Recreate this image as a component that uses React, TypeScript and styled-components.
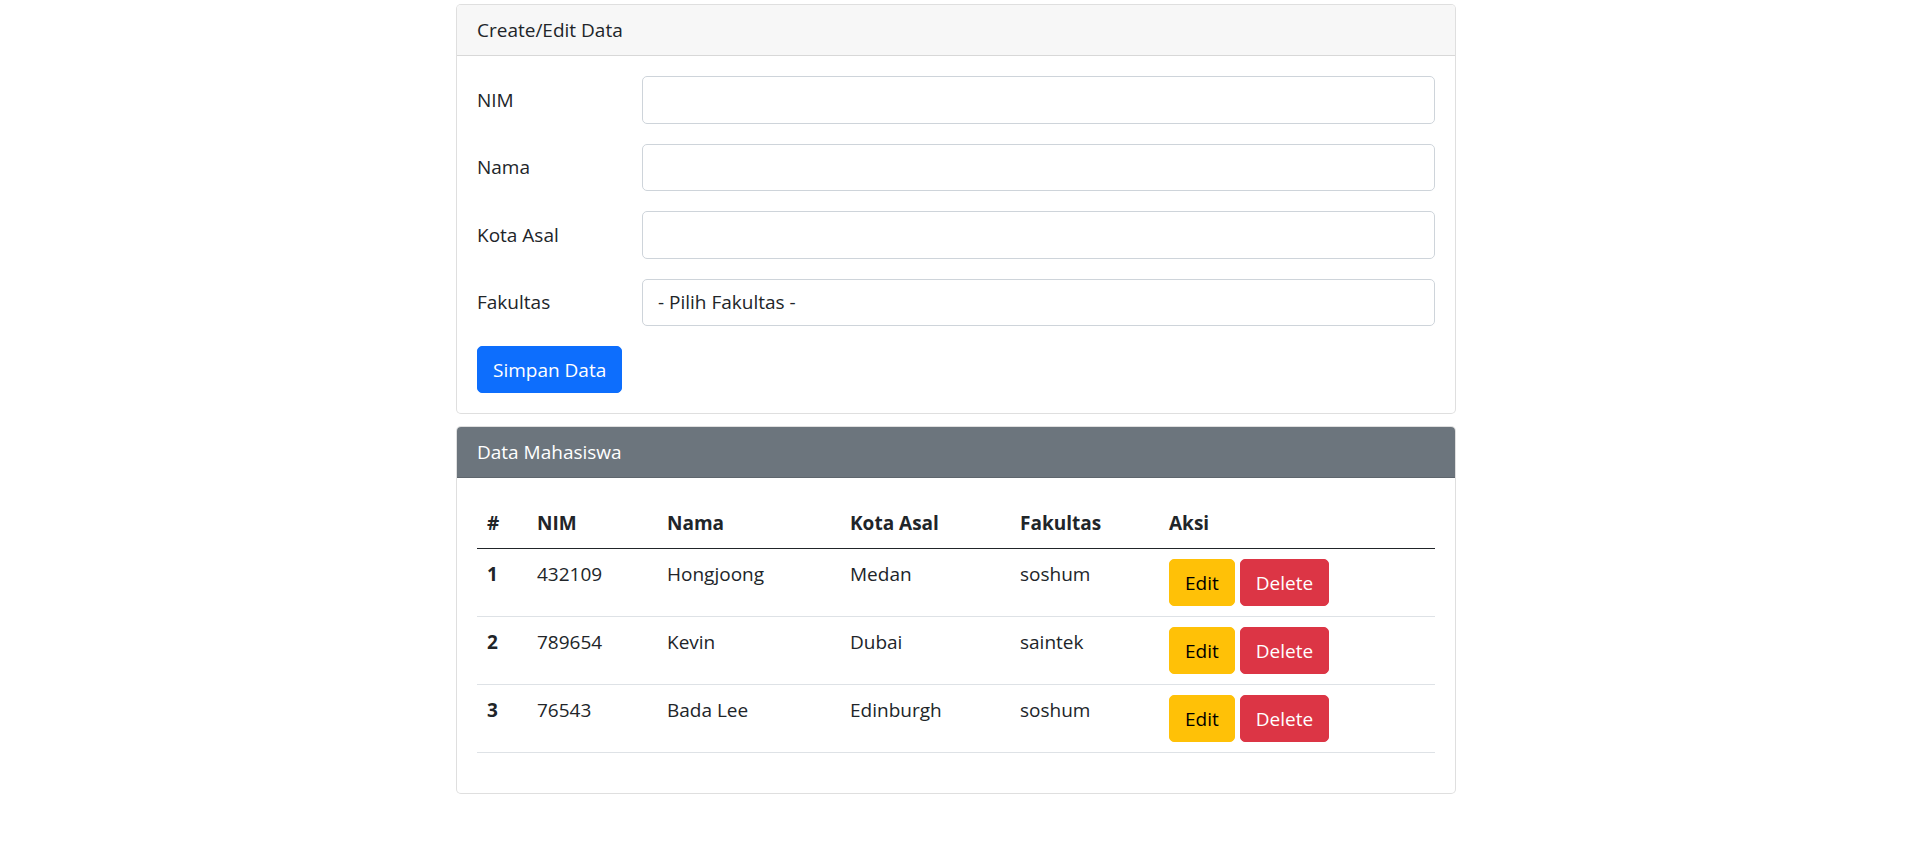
import React from "react";
import styled, { createGlobalStyle, css } from "styled-components";

const GlobalStyle = createGlobalStyle`
  * { box-sizing: border-box; }
  html, body { margin: 0; padding: 0; background: #fff; }
  body {
    font-family: "Open Sans", "Noto Sans", sans-serif;
    font-size: 19px;
    line-height: 30px;
    color: #212529;
  }
`;

const Page = styled.div`
  display: flex;
  justify-content: center;
  padding: 4px 0 40px 5px;
`;

const Column = styled.div`
  width: 1000px;
  display: flex;
  flex-direction: column;
  gap: 12px;
`;

const Card = styled.section`
  border: 1px solid rgba(0, 0, 0, 0.125);
  border-radius: 5px;
  background: #fff;
  overflow: hidden;
`;

const CardHeader = styled.div<{ $variant?: "light" | "secondary" }>`
  padding: 10px 20px;
  line-height: 30px;
  border-bottom: 1px solid rgba(0, 0, 0, 0.125);
  ${({ $variant }) =>
    $variant === "secondary"
      ? css`
          background: #6c757d;
          color: #fff;
        `
      : css`
          background: #f7f7f7;
          color: #212529;
        `}
`;

const CardBody = styled.div`
  padding: 20px;
`;

const FormRow = styled.div`
  display: grid;
  grid-template-columns: 165px 1fr;
  margin-bottom: 20px;
`;

const Label = styled.label`
  padding: 8.75px 0;
  line-height: 30px;
`;

const fieldStyles = css`
  display: block;
  width: 100%;
  height: 47.5px;
  padding: 7.75px 15px;
  font-family: inherit;
  font-size: 19px;
  line-height: 30px;
  color: #212529;
  background: #fff;
  border: 1px solid #ced4da;
  border-radius: 5px;
  outline: none;
`;

const Input = styled.input`
  ${fieldStyles}
`;

const Select = styled.select`
  ${fieldStyles}
  appearance: none;
  -webkit-appearance: none;
`;

const Button = styled.button<{ $tone: "primary" | "warning" | "danger" }>`
  display: inline-block;
  height: 47px;
  padding: 7.5px 15px;
  font-family: inherit;
  font-size: 19px;
  line-height: 30px;
  border-radius: 5px;
  border: 1px solid transparent;
  cursor: pointer;
  ${({ $tone }) =>
    $tone === "primary"
      ? css`
          background: #0d6efd;
          border-color: #0d6efd;
          color: #fff;
        `
      : $tone === "warning"
      ? css`
          background: #ffc107;
          border-color: #ffc107;
          color: #000;
        `
      : css`
          background: #dc3545;
          border-color: #dc3545;
          color: #fff;
        `}
`;

const Table = styled.table`
  width: 100%;
  border-collapse: collapse;
  table-layout: fixed;
  margin-bottom: 20px;
`;

const Th = styled.th<{ $w?: number }>`
  ${({ $w }) => ($w ? `width: ${$w}px;` : "")}
  text-align: left;
  font-weight: 700;
  padding: 10px;
  line-height: 30px;
  vertical-align: bottom;
  border-bottom: 1px solid #212529;
`;

const Td = styled.td<{ $bold?: boolean }>`
  padding: 10px;
  line-height: 30px;
  vertical-align: top;
  font-weight: ${({ $bold }) => ($bold ? 700 : 400)};
`;

const Tr = styled.tr`
  border-bottom: 1px solid #dee2e6;
`;

const Actions = styled.div`
  display: flex;
  gap: 5px;
`;

const rows = [
  { no: 1, nim: "432109", nama: "Hongjoong", kota: "Medan", fak: "soshum" },
  { no: 2, nim: "789654", nama: "Kevin", kota: "Dubai", fak: "saintek" },
  { no: 3, nim: "76543", nama: "Bada Lee", kota: "Edinburgh", fak: "soshum" },
];

export default function App() {
  return (
    <>
      <GlobalStyle />
      <Page>
        <Column>
          <Card>
            <CardHeader>Create/Edit Data</CardHeader>
            <CardBody>
              <FormRow>
                <Label>NIM</Label>
                <Input type="text" />
              </FormRow>
              <FormRow>
                <Label>Nama</Label>
                <Input type="text" />
              </FormRow>
              <FormRow>
                <Label>Kota Asal</Label>
                <Input type="text" />
              </FormRow>
              <FormRow>
                <Label>Fakultas</Label>
                <Select defaultValue="">
                  <option value="">- Pilih Fakultas -</option>
                  <option value="soshum">soshum</option>
                  <option value="saintek">saintek</option>
                </Select>
              </FormRow>
              <Button $tone="primary">Simpan Data</Button>
            </CardBody>
          </Card>

          <Card>
            <CardHeader $variant="secondary">Data Mahasiswa</CardHeader>
            <CardBody>
              <Table>
                <thead>
                  <tr>
                    <Th $w={50}>#</Th>
                    <Th $w={130}>NIM</Th>
                    <Th $w={183}>Nama</Th>
                    <Th $w={170}>Kota Asal</Th>
                    <Th $w={149}>Fakultas</Th>
                    <Th>Aksi</Th>
                  </tr>
                </thead>
                <tbody>
                  {rows.map((r) => (
                    <Tr key={r.no}>
                      <Td $bold>{r.no}</Td>
                      <Td>{r.nim}</Td>
                      <Td>{r.nama}</Td>
                      <Td>{r.kota}</Td>
                      <Td>{r.fak}</Td>
                      <Td>
                        <Actions>
                          <Button $tone="warning">Edit</Button>
                          <Button $tone="danger">Delete</Button>
                        </Actions>
                      </Td>
                    </Tr>
                  ))}
                </tbody>
              </Table>
            </CardBody>
          </Card>
        </Column>
      </Page>
    </>
  );
}
